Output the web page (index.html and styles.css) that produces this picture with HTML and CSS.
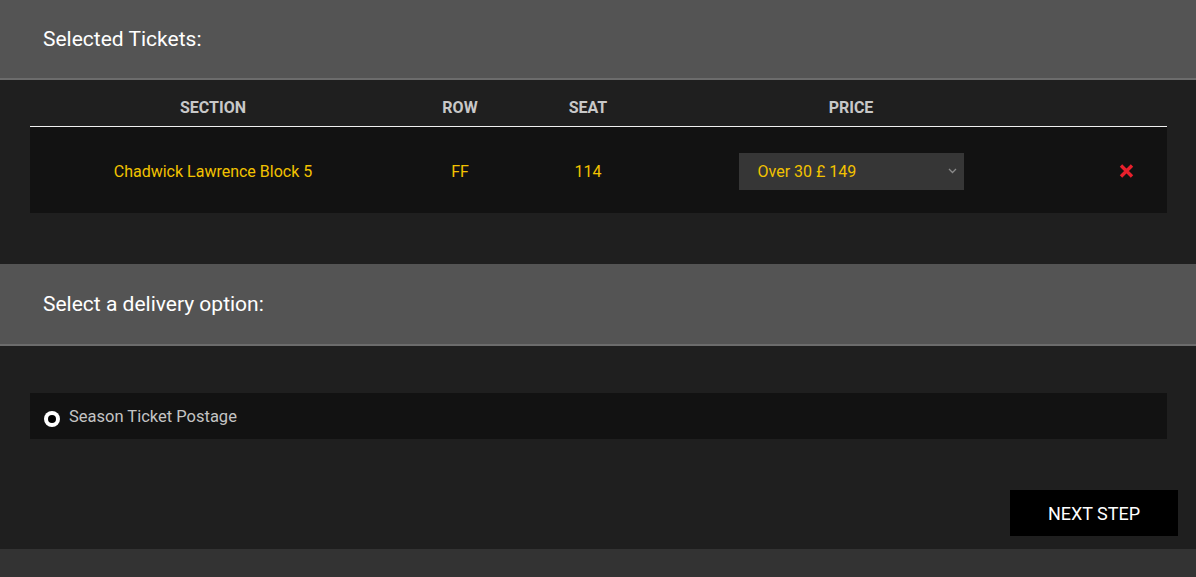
FILE: index.html
```html
<!DOCTYPE html>
<html lang="en">
<head>
  <meta charset="UTF-8" />
  <meta name="viewport" content="width=device-width, initial-scale=1.0"/>
  <title>Checkout - Tickets</title>
  <link rel="stylesheet" href="styles.css">
</head>
<body>
  <div class="panel-head">
    <h2>Selected Tickets:</h2>
  </div>

  <div class="panel-body tickets">
    <div class="tbl">
      <div class="tbl-head">
        <div class="c-section">SECTION</div>
        <div class="c-row">ROW</div>
        <div class="c-seat">SEAT</div>
        <div class="c-price">PRICE</div>
        <div class="c-del"></div>
      </div>
      <div class="tbl-row">
        <div class="c-section">Chadwick Lawrence Block 5</div>
        <div class="c-row">FF</div>
        <div class="c-seat">114</div>
        <div class="c-price">
          <div class="price-select">
            <span>Over 30 £ 149</span>
            <svg class="chev" width="9" height="6" viewBox="0 0 9 6"><path d="M1 1 L4.5 4.5 L8 1" fill="none" stroke="#8a8a8a" stroke-width="1.3"/></svg>
          </div>
        </div>
        <div class="c-del">
          <svg width="15" height="14" viewBox="0 0 15 14"><path d="M2 1.5 L13 12.5 M13 1.5 L2 12.5" stroke="#e8202c" stroke-width="3.4"/></svg>
        </div>
      </div>
    </div>
  </div>

  <div class="panel-head tall">
    <h2>Select a delivery option:</h2>
  </div>

  <div class="panel-body delivery">
    <label class="option">
      <span class="radio"></span>
      <span class="option-name">Season Ticket Postage</span>
    </label>
    <div class="actions">
      <button class="next-btn">NEXT STEP</button>
    </div>
  </div>

  <div class="page-foot"></div>
</body>
</html>
```

FILE: styles.css
```css
* {
  margin: 0;
  padding: 0;
  box-sizing: border-box;
}
html, body {
  width: 100%;
  height: 100%;
  overflow: hidden;
  background-color: #333;
  font-family: Roboto, "Liberation Sans", sans-serif;
}
.panel-head {
  height: 80px;
  background-color: #545454;
  border-bottom: 2px solid #6c6c6c;
  display: flex;
  align-items: center;
  padding-left: 43px;
}
.panel-head.tall {
  height: 82px;
}
.panel-head h2 {
  color: #fff;
  font-size: 21px;
  font-weight: 400;
  padding-bottom: 1px;
}
.panel-body {
  background-color: #1f1f1f;
  padding: 0 29px 0 30px;
}
.tickets {
  height: 184px;
}
.tbl-head,
.tbl-row {
  display: grid;
  grid-template-columns: 366px 128px 128px 398px 117px;
  align-items: center;
  text-align: center;
}
.tbl-head {
  height: 47px;
  border-bottom: 1px solid #f0f0f0;
  color: #c8c8c8;
  font-size: 16px;
  font-weight: 700;
  padding-top: 9px;
}
.tbl-row {
  height: 86px;
  background-color: #121212;
  color: #f2c200;
  font-size: 16px;
  padding-top: 2px;
}
.price-select {
  width: 225px;
  height: 37px;
  margin: 0 auto;
  background-color: #363636;
  display: flex;
  align-items: center;
  justify-content: space-between;
  padding: 0 7px 0 19px;
  font-size: 16px;
}
.chev {
  display: block;
}
.c-del svg {
  display: block;
  margin-left: 69px;
}
.delivery {
  height: 203px;
  padding-top: 47px;
}
.option {
  display: flex;
  align-items: center;
  height: 46px;
  background-color: #121212;
  padding-left: 14px;
}
.radio {
  width: 16px;
  height: 16px;
  border-radius: 50%;
  background-color: #fff;
  display: flex;
  align-items: center;
  justify-content: center;
  margin-top: 6px;
}
.radio::after {
  content: "";
  width: 8px;
  height: 8px;
  border-radius: 50%;
  background-color: #000;
}
.option-name {
  color: #c4c4c4;
  font-size: 16.5px;
  margin-left: 9px;
}
.actions {
  display: flex;
  justify-content: flex-end;
  margin-top: 51px;
  margin-right: -11px;
}
.next-btn {
  width: 168px;
  height: 46px;
  background-color: #000;
  color: #fff;
  border: none;
  font-family: Roboto, "Liberation Sans", sans-serif;
  font-size: 18px;
  padding-top: 1px;
}
.page-foot {
  height: 28px;
  background-color: #333;
}
```
